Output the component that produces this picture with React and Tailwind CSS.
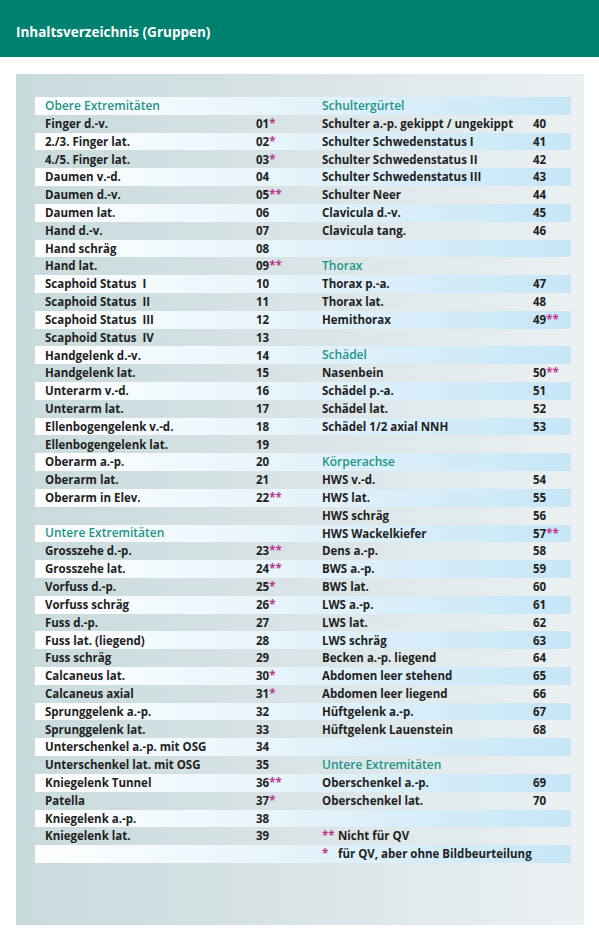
import React from "react";

// each entry: [name, number, stars] — "h" marks a group heading, null an empty cell
const leftCol = [
    ["h", "Obere Extremitäten"],
    ["Finger d.-v.", "01", "*"],
    ["2./3. Finger lat.", "02", "*"],
    ["4./5. Finger lat.", "03", "*"],
    ["Daumen v.-d.", "04"],
    ["Daumen d.-v.", "05", "**"],
    ["Daumen lat.", "06"],
    ["Hand d.-v.", "07"],
    ["Hand schräg", "08"],
    ["Hand lat.", "09", "**"],
    ["Scaphoid Status  I", "10"],
    ["Scaphoid Status  II", "11"],
    ["Scaphoid Status  III", "12"],
    ["Scaphoid Status  IV", "13"],
    ["Handgelenk d.-v.", "14"],
    ["Handgelenk lat.", "15"],
    ["Unterarm v.-d.", "16"],
    ["Unterarm lat.", "17"],
    ["Ellenbogengelenk v.-d.", "18"],
    ["Ellenbogengelenk lat.", "19"],
    ["Oberarm a.-p.", "20"],
    ["Oberarm lat.", "21"],
    ["Oberarm in Elev.", "22", "**"],
    null,
    ["h", "Untere Extremitäten"],
    ["Grosszehe d.-p.", "23", "**"],
    ["Grosszehe lat.", "24", "**"],
    ["Vorfuss d.-p.", "25", "*"],
    ["Vorfuss schräg", "26", "*"],
    ["Fuss d.-p.", "27"],
    ["Fuss lat. (liegend)", "28"],
    ["Fuss schräg", "29"],
    ["Calcaneus lat.", "30", "*"],
    ["Calcaneus axial", "31", "*"],
    ["Sprunggelenk a.-p.", "32"],
    ["Sprunggelenk lat.", "33"],
    ["Unterschenkel a.-p. mit OSG", "34"],
    ["Unterschenkel lat. mit OSG", "35"],
    ["Kniegelenk Tunnel", "36", "**"],
    ["Patella", "37", "*"],
    ["Kniegelenk a.-p.", "38"],
    ["Kniegelenk lat.", "39"],
    null,
];

const rightCol = [
    ["h", "Schultergürtel"],
    ["Schulter a.-p. gekippt / ungekippt", "40"],
    ["Schulter Schwedenstatus I", "41"],
    ["Schulter Schwedenstatus II", "42"],
    ["Schulter Schwedenstatus III", "43"],
    ["Schulter Neer", "44"],
    ["Clavicula d.-v.", "45"],
    ["Clavicula tang.", "46"],
    null,
    ["h", "Thorax"],
    ["Thorax p.-a.", "47"],
    ["Thorax lat.", "48"],
    ["Hemithorax", "49", "**"],
    null,
    ["h", "Schädel"],
    ["Nasenbein", "50", "**"],
    ["Schädel p.-a.", "51"],
    ["Schädel lat.", "52"],
    ["Schädel 1/2 axial NNH", "53"],
    null,
    ["h", "Körperachse"],
    ["HWS v.-d.", "54"],
    ["HWS lat.", "55"],
    ["HWS schräg", "56"],
    ["HWS Wackelkiefer", "57", "**"],
    ["Dens a.-p.", "58"],
    ["BWS a.-p.", "59"],
    ["BWS lat.", "60"],
    ["LWS a.-p.", "61"],
    ["LWS lat.", "62"],
    ["LWS schräg", "63"],
    ["Becken a.-p. liegend", "64"],
    ["Abdomen leer stehend", "65"],
    ["Abdomen leer liegend", "66"],
    ["Hüftgelenk a.-p.", "67"],
    ["Hüftgelenk Lauenstein", "68"],
    null,
    ["h", "Untere Extremitäten"],
    ["Oberschenkel a.-p.", "69"],
    ["Oberschenkel lat.", "70"],
    null,
    ["legend", "**", "Nicht für QV"],
    ["legend", "*", "für QV, aber ohne Bildbeurteilung"],
];

function Cell({ item, side }) {
    const pad = side === "left" ? "pl-[10px]" : "pl-[19px]";
    if (!item) return <div className={pad} />;

    if (item[0] === "h") {
        return (
            <div className={`${pad} flex items-center text-[12px] font-semibold text-[#1c9488]`}>{item[1]}</div>
        );
    }

    if (item[0] === "legend") {
        return (
            <div className={`${pad} flex items-center`}>
                <span className="w-[16px] text-[#c2338f]">{item[1]}</span>
                <span>{item[2]}</span>
            </div>
        );
    }

    const [name, num, stars] = item;
    return (
        <div className={`${pad} flex items-center`}>
            <span className="w-[211px] shrink-0 whitespace-pre">{name}</span>
            <span>
                {num}
                {stars && <span className="text-[#c2338f]">{stars}</span>}
            </span>
        </div>
    );
}

export default function App() {
    return (
        <div
            className="w-[599px] h-[933px] bg-white overflow-hidden text-[#1f2222]"
            style={{ fontFamily: '"Open Sans", "Noto Sans", sans-serif' }}
        >
            <div className="h-[57px] bg-[#00816f] flex items-center pl-[16px] pt-[8px]">
                <h1 className="text-white text-[13.5px] font-bold">
                    Inhaltsverzeichnis (Gruppen)
                </h1>
            </div>

            <div className="mt-[17px] ml-[16px] w-[568px] h-[851px] pt-[23px] pl-[19px] bg-gradient-to-r from-[#c8dbdc] via-[#d9e4e6] to-[#ecf1f3]">
                <div className="w-[536px] text-[11.5px] font-bold">
                    {leftCol.map((l, i) => (
                        <div
                            key={i}
                            className={`grid grid-cols-[268px_268px] h-[17.82px] leading-none ${
                                i % 2 === 0
                                    ? "bg-gradient-to-r from-white via-[#e4f3fb] to-[#c6e6f7]"
                                    : ""
                            }`}
                        >
                            <Cell item={l} side="left" />
                            <Cell item={rightCol[i]} side="right" />
                        </div>
                    ))}
                </div>
            </div>
        </div>
    );
}
